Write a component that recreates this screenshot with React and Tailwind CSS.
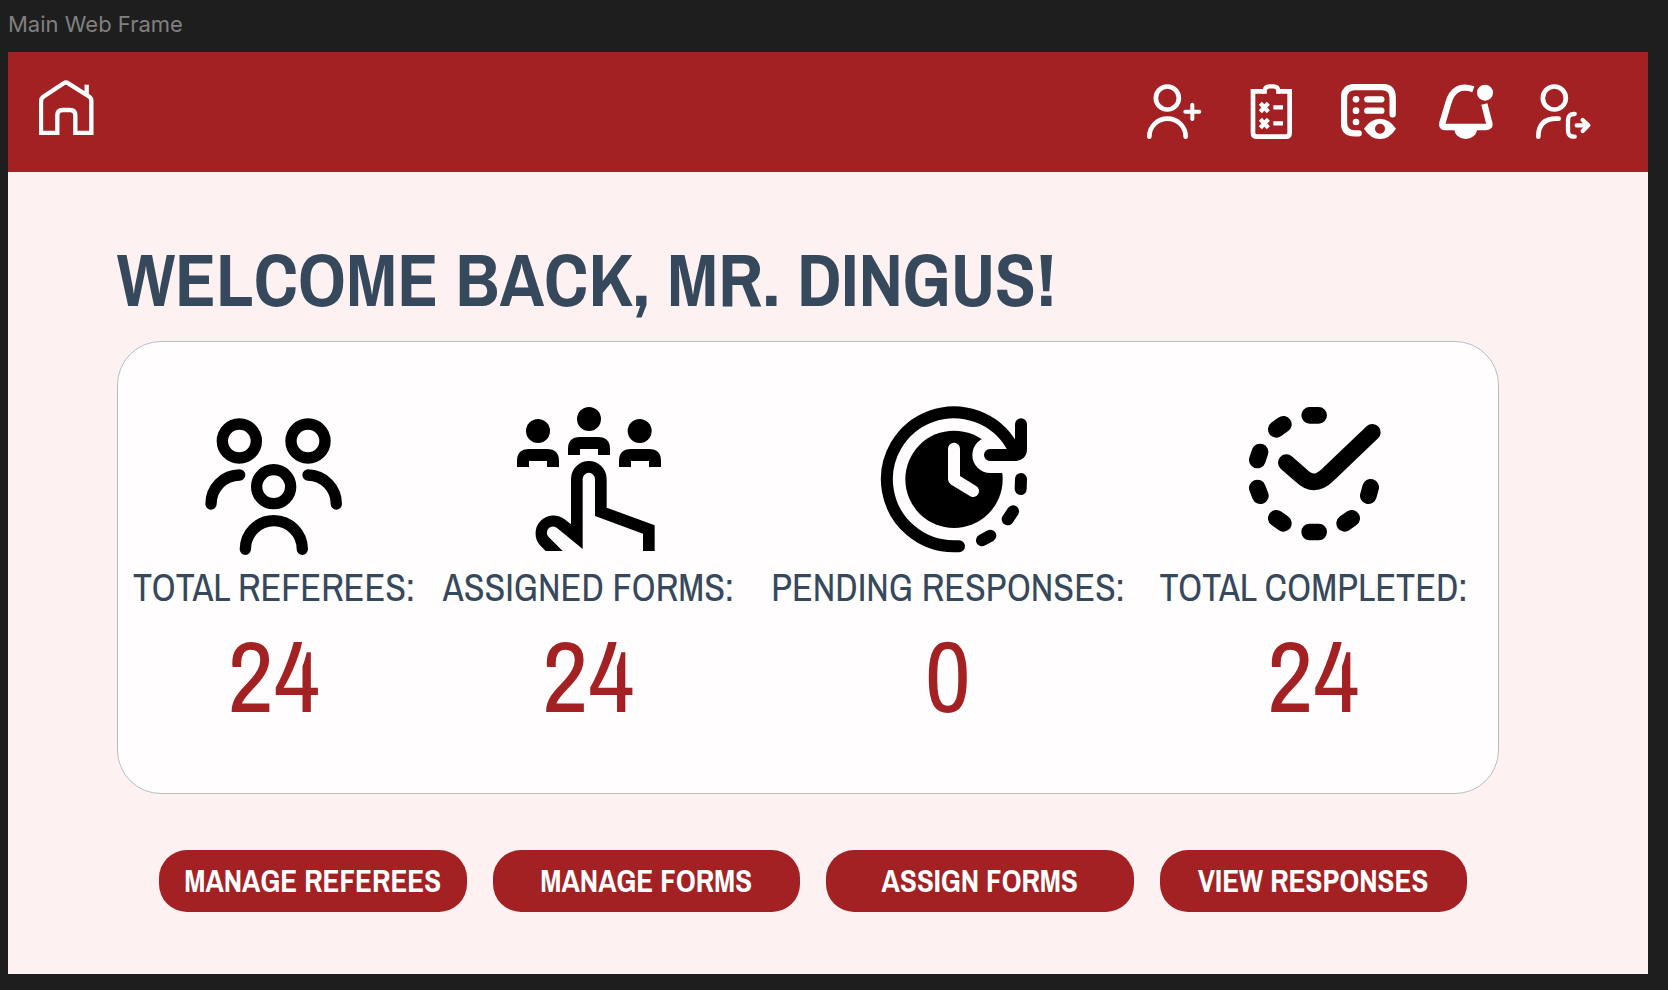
const HomeIcon = () => (
  <svg className="size-[55px]" viewBox="117 240 165 165" fill="none" stroke="currentColor" strokeWidth="13" aria-hidden="true">
    <path d="M172 399H123V303q0-7 6-12L191 250q7-5 14 0L268 290q6 5 6 12V399H226V346q0-16-16-16h-22q-16 0-16 16Z" />
    <path d="M260 254v34" />
  </svg>
);

const AddUserIcon = () => (
  <svg className="size-[55px]" viewBox="80 72 165 165" fill="none" stroke="currentColor" strokeLinecap="round" aria-hidden="true">
    <circle cx="141" cy="114" r="34.5" strokeWidth="14" />
    <path d="M87 230a54.5 54 0 0 1 109 0" strokeWidth="14" />
    <path d="M195 155h42M216 134v43" strokeWidth="12" />
  </svg>
);

const FormsIcon = () => (
  <svg className="size-[55px]" viewBox="372 72 165 165" fill="none" stroke="currentColor" aria-hidden="true">
    <path d="M434 94H399V218q0 12 12 12H497q12 0 12-12V94H475" strokeWidth="14" />
    <path d="M434 101V94q0-15 15-15h11q15 0 15 15v7" strokeWidth="13" />
    <path d="M421 130l24 25M445 130l-24 25M421 178l24 25M445 178l-24 25" strokeWidth="13" />
    <path d="M460 142h29M460 190h29" strokeWidth="13" />
  </svg>
);

const ResponsesIcon = () => (
  <svg className="size-[55px]" viewBox="663 72 165 165" fill="none" stroke="currentColor" strokeLinecap="round" aria-hidden="true">
    <path d="M716 220H704q-32 0-32-32V114q0-33 33-33H786q32 0 32 32V163" strokeWidth="19" />
    <path d="M742 118h42M742 152h42" strokeWidth="19" />
    <g fill="currentColor" stroke="none">
      <circle cx="708" cy="118" r="10" />
      <circle cx="708" cy="152" r="10" />
      <circle cx="708" cy="186" r="10" />
      <path fillRule="evenodd" d="M732 206q20-30 48-30t48 30q-20 31-48 31t-48-31ZM795 206a15 15 0 1 0-30 0a15 15 0 1 0 30 0Z" />
    </g>
  </svg>
);

const BellIcon = () => (
  <svg className="size-[55px]" viewBox="175 72 165 165" fill="none" stroke="currentColor" aria-hidden="true">
    <path d="M281 88q-58-20-75 41L188 190q-2 11 8 11H320q11 0 9-11L314 132" strokeWidth="19" />
    <circle cx="316" cy="98" r="24" fill="currentColor" stroke="none" />
    <path d="M224 206h68a34 31 0 0 1-68 0Z" fill="currentColor" stroke="none" />
  </svg>
);

const LogoutIcon = () => (
  <svg className="size-[55px] overflow-visible" viewBox="465 72 165 165" fill="none" stroke="currentColor" strokeLinecap="round" strokeLinejoin="round" aria-hidden="true">
    <circle cx="523" cy="114" r="34.5" strokeWidth="14" />
    <path d="M475 230q0-54 54-54h7" strokeWidth="14" />
    <path d="M584 162q-20-1-20 18v32q0 19 20 18" strokeWidth="13" />
    <path d="M590 196h34M608 180l17 16l-17 17" strokeWidth="13" />
  </svg>
);

const RefereesIcon = () => (
  <svg className="h-[180px] w-[190px]" viewBox="-3 0 570 540" fill="none" stroke="currentColor" strokeWidth="34" strokeLinecap="round" aria-hidden="true">
    <circle cx="178" cy="153" r="51" />
    <circle cx="384" cy="153" r="51" />
    <circle cx="281" cy="290" r="51" />
    <path d="M93 342A86 87 0 0 1 179 255M384 255A86 87 0 0 1 469 342M196 478A85.5 86 0 0 1 367 478" />
  </svg>
);

const AssignedIcon = () => (
  <svg className="h-[180px] w-[190px]" viewBox="9 0 570 540" fill="currentColor" aria-hidden="true">
    <circle cx="144" cy="123" r="36" />
    <circle cx="297" cy="87" r="36" />
    <circle cx="449" cy="123" r="36" />
    <path d="M81 231V213q0-36 36-36H171q36 0 36 36V231H171V213H117V231Z" />
    <path d="M234 195V177q0-36 36-36H324q36 0 36 36V195H324V177H270V195Z" />
    <path d="M387 231V213q0-36 36-36H477q36 0 36 36V231H477V213H423V231Z" />
    <path d="M243 403L224 388A54 54 0 0 0 150 466L167 483H218L176 441A18 18 0 0 1 202 415L278 477V267a18.5 18.5 0 0 1 37 0V378L459 431V483H494V406L350 353V267a53.5 54 0 0 0-107 0Z" />
  </svg>
);

const PendingIcon = () => (
  <svg className="h-[180px] w-[190px]" viewBox="-21 0 570 540" fill="none" stroke="currentColor" strokeWidth="36" strokeLinecap="round" strokeLinejoin="round" aria-hidden="true">
    <circle cx="282" cy="268" r="146" fill="currentColor" stroke="none" />
    <path className="stroke-[#fffdfe]" d="M391 195H450" strokeWidth="108" />
    <path className="stroke-[#fffdfe]" d="M282 176V268L339 303" />
    <path d="M297 469H282A201 201 0 1 1 456 168L466 190" />
    <path d="M483 103V177q0 18-18 18H390" />
    <path d="M483 267L482 297M459 364L443 388M391 437L366 451" />
  </svg>
);

const CompletedIcon = () => (
  <svg className="h-[180px] w-[190px]" viewBox="-6 0 570 540" fill="none" stroke="currentColor" strokeWidth="50" strokeLinecap="round" aria-hidden="true">
    <path d="M269 76h27M269 426h27M190 103L169 118M120 186L112 210M112 294L121 317M169 385L190 400M395 385L374 400M452 292L445 317" />
    <path d="M199 218L243 256Q282 295 322 256L457 127" />
  </svg>
);

const navItems = [
  { label: "Add referee", Icon: AddUserIcon },
  { label: "Forms", Icon: FormsIcon },
  { label: "Responses", Icon: ResponsesIcon },
  { label: "Notifications", Icon: BellIcon },
  { label: "Log out", Icon: LogoutIcon },
];

const stats = [
  { label: "TOTAL REFEREES:", value: 24, Icon: RefereesIcon },
  { label: "ASSIGNED FORMS:", value: 24, Icon: AssignedIcon },
  { label: "PENDING RESPONSES:", value: 0, Icon: PendingIcon },
  { label: "TOTAL COMPLETED:", value: 24, Icon: CompletedIcon },
];

const actions = ["MANAGE REFEREES", "MANAGE FORMS", "ASSIGN FORMS", "VIEW RESPONSES"];

export default function App() {
  return (
    <div className="flex min-h-screen flex-col bg-[#1e1e1e] pr-5 pb-4 pl-2 font-['Liberation_Sans_Narrow','Archivo_Narrow','Liberation_Sans',sans-serif]">
      <p className="h-[52px] pt-2 font-['Inter',sans-serif] text-[22px] leading-8 text-[#808080]">Main Web Frame</p>
      <div className="flex grow flex-col bg-[#fdf1f1]">
        <header className="flex h-[120px] items-start justify-between bg-[#a32123] pt-7 pr-[58px] pl-[31px] text-white">
          <a href="#home" aria-label="Home">
            <HomeIcon />
          </a>
          <nav className="flex gap-[42px] pt-1">
            {navItems.map(({ label, Icon }) => (
              <button key={label} type="button" aria-label={label}>
                <Icon />
              </button>
            ))}
          </nav>
        </header>

        <main className="pt-16 pr-[149px] pl-[109px]">
          <h1 className="text-[75px] leading-[85px] font-bold whitespace-nowrap text-[#36485c]">
            WELCOME BACK, MR. DINGUS!
          </h1>

          <section className="mt-5 grid h-[453px] grid-cols-[312fr_318fr_402fr_330fr] rounded-[44px] border border-[#b4bfbf] bg-[#fffdfe] pt-12 pr-5">
            {stats.map(({ label, value, Icon }) => (
              <div key={label} className="flex min-w-0 flex-col items-center text-black">
                <Icon />
                <h2 className="text-[38px] leading-9 whitespace-nowrap text-[#36485c]">{label}</h2>
                <p className="mt-[18px] text-[101px] leading-[104px] text-[#a32123]">{value}</p>
              </div>
            ))}
          </section>

          <div className="mt-14 grid grid-cols-4 gap-[26px] pr-8 pl-[42px]">
            {actions.map((label) => (
              <button key={label} type="button" className="h-[62px] rounded-[28px] bg-[#a32123] text-[31px] leading-8 font-bold whitespace-nowrap text-white">
                {label}
              </button>
            ))}
          </div>
        </main>
      </div>
    </div>
  );
}
